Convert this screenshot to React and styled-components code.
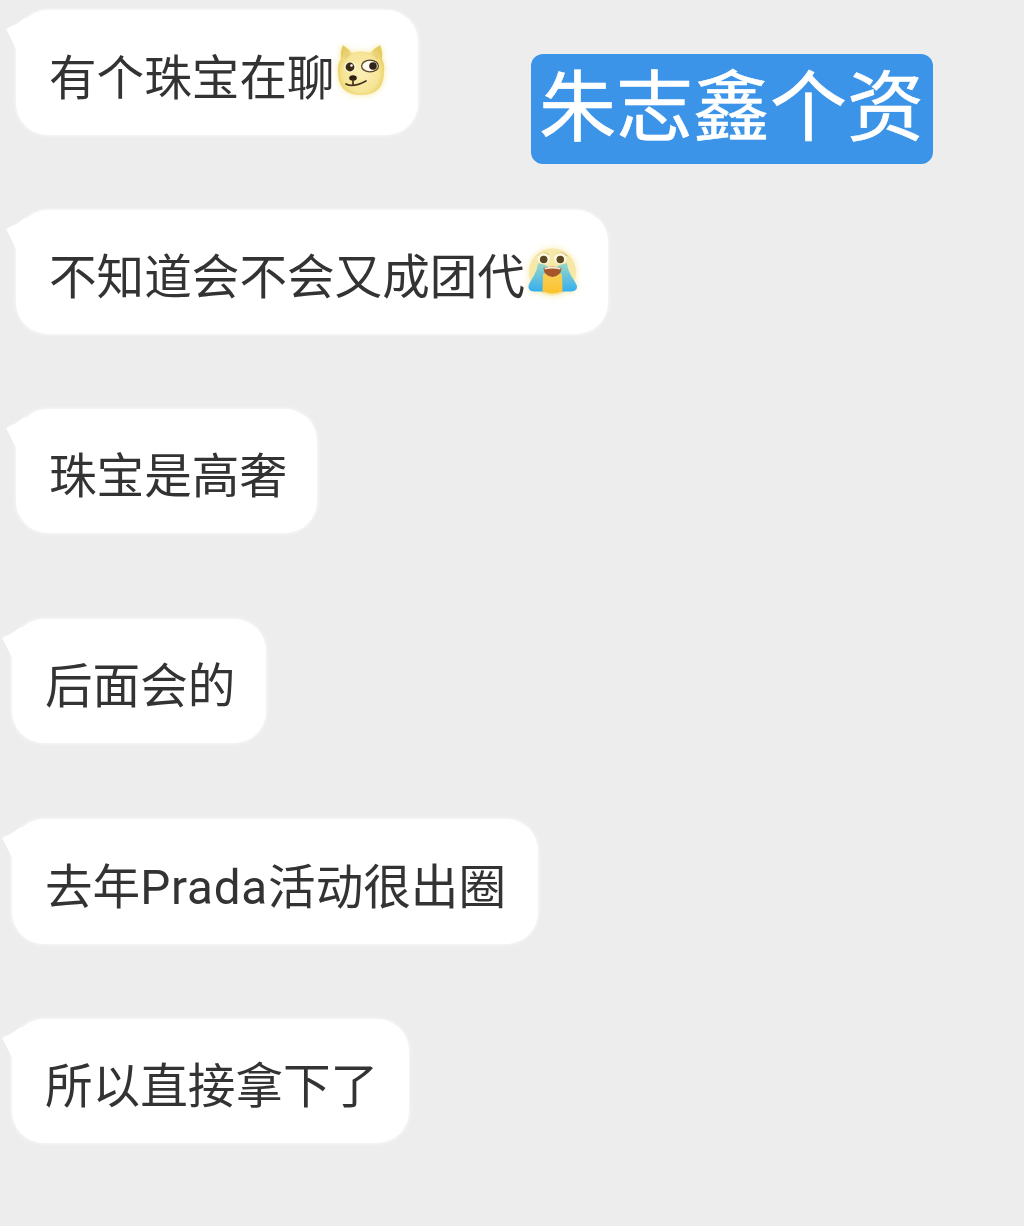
import React from 'react';
import styled, { createGlobalStyle } from 'styled-components';

const GlobalStyle = createGlobalStyle`
  html, body {
    margin: 0;
    padding: 0;
    background: #ededed;
  }
`;

const Page = styled.div`
  position: relative;
  display: flex;
  flex-direction: column;
  align-items: flex-start;
  width: 1024px;
  height: 1226px;
  padding-top: 10px;
  box-sizing: border-box;
  overflow: hidden;
  background: #ededed;
  font-family: Roboto, "Noto Sans CJK SC", "Noto Sans", sans-serif;
`;

const Bubble = styled.div`
  position: relative;
  display: flex;
  align-items: center;
  box-sizing: border-box;
  width: ${(p) => p.$width}px;
  height: ${(p) => p.$height || 124}px;
  margin-left: ${(p) => p.$left}px;
  margin-bottom: ${(p) => p.$gap}px;
  padding-left: 34px;
  background: #ffffff;
  border-radius: 32px;
  box-shadow: 0 0 4px rgba(255, 255, 255, 0.9);

  &::before {
    content: "";
    position: absolute;
    left: -10px;
    top: 7px;
    width: 20px;
    height: 32px;
    background: #ffffff;
    clip-path: polygon(100% 0, 50% 22%, 8% 34%, 0 38%, 14% 54%, 50% 100%, 100% 100%);
    filter: blur(1.2px);
  }
`;

const Message = styled.span`
  font-size: 47.6px;
  line-height: 1;
  font-weight: 400;
  color: #333333;
  white-space: nowrap;
  position: relative;
  top: 7px;
  left: -1px;
  filter: blur(0.5px);
`;

const Latin = styled.span`
  letter-spacing: 0.8px;
`;

const Emoji = styled.svg`
  flex: none;
  display: block;
  margin-top: ${(p) => p.$shift}px;
  margin-left: ${(p) => p.$nudge || 0}px;
  filter: blur(0.5px) drop-shadow(0 0 3px rgba(245, 222, 120, 0.7));
`;

const Label = styled.div`
  position: absolute;
  left: 531px;
  top: 54px;
  box-sizing: border-box;
  width: 402px;
  height: 110px;
  padding: 17px 0 0 8px;
  background: #3c94e8;
  border-radius: 12px;
  color: #ffffff;
  font-size: 77px;
  font-weight: 400;
  line-height: 1;
  white-space: nowrap;
  -webkit-text-stroke: 0.6px #ffffff;
  filter: blur(0.4px);
`;

const DogeEmoji = () => (
  <Emoji width="50" height="54" viewBox="0 0 50 54" $shift={-5} $nudge={1}>
    <defs>
      <radialGradient id="dogeFace" cx="50%" cy="55%" r="55%">
        <stop offset="0%" stopColor="#fbefb8" />
        <stop offset="70%" stopColor="#f6e596" />
        <stop offset="100%" stopColor="#e6cc5e" />
      </radialGradient>
    </defs>
    <path
      d="M6 2 Q10 5 15 10 Q24 7 33 10 Q38 5 43 2 Q46 8 45 16 Q48 22 47 29 Q47 52 24 52 Q1 52 1 29 Q0 22 4 16 Q3 8 6 2Z"
      fill="url(#dogeFace)"
    />
    <path d="M8 7 L13 12 L8 17Z" fill="#e7cf7c" />
    <path d="M41 7 L36 12 L41 17Z" fill="#e7cf7c" />
    <ellipse cx="13" cy="24" rx="6" ry="5.4" fill="#fff6da" />
    <circle cx="13" cy="24" r="4.4" fill="#3a2a16" />
    <circle cx="14.5" cy="22.5" r="1.3" fill="#ffffff" />
    <ellipse cx="33" cy="23" rx="8.4" ry="5.8" fill="#fffdf2" stroke="#5b4526" strokeWidth="1.3" />
    <circle cx="36" cy="23" r="3.8" fill="#2f2316" />
    <ellipse cx="16" cy="35" rx="3.8" ry="2.8" fill="#2c2014" />
    <path d="M16 37 L16 41 M9 41 Q16 45 29 38" fill="none" stroke="#46341c" strokeWidth="1.7" strokeLinecap="round" />
  </Emoji>
);

const CryEmoji = () => (
  <Emoji width="54" height="50" viewBox="0 0 54 50" $shift={0} $nudge={1}>
    <defs>
      <linearGradient id="cryTears" x1="0" y1="0" x2="0" y2="1">
        <stop offset="0%" stopColor="#9ad8c8" />
        <stop offset="100%" stopColor="#35aef0" />
      </linearGradient>
      <linearGradient id="cryFlow" x1="0" y1="0" x2="0" y2="1">
        <stop offset="0%" stopColor="#f6d25a" />
        <stop offset="100%" stopColor="#fdc22e" />
      </linearGradient>
    </defs>
    <circle cx="25.5" cy="25" r="23.5" fill="#f6e8a8" />
    <path d="M11 9 Q17 4 22 8 M29 8 Q34 4 40 9" fill="none" stroke="#cdb563" strokeWidth="1.3" />
    <path
      d="M11 16 C10 27 3 33 1.5 39 C1 44 6 45 10 44.5 L41 44.5 C45 45 50.5 44 50 39 C48 33 41 27 40 16 L33 18 L25.5 22 L18 18Z"
      fill="url(#cryTears)"
    />
    <path d="M16 27 L15.5 44 Q25.5 49 35.5 44 L35 27 L25.5 24Z" fill="url(#cryFlow)" />
    <path d="M16.5 21 Q25.5 18 34.5 21 Q34 29 25.5 30 Q17 29 16.5 21Z" fill="#a6562b" />
    <path d="M17.5 21 Q25.5 18.5 33.5 21 L33.2 22.6 Q25.5 20.6 17.8 22.6Z" fill="#f5edd8" />
    <ellipse cx="16.7" cy="11.5" rx="6.2" ry="5.6" fill="#fff8e0" />
    <circle cx="16.7" cy="12.5" r="3.8" fill="#5b4722" />
    <ellipse cx="33.3" cy="11.5" rx="6.2" ry="5.6" fill="#fff8e0" />
    <circle cx="33.3" cy="12.5" r="3.8" fill="#5b4722" />
  </Emoji>
);

export default function App() {
  return (
    <>
      <GlobalStyle />
      <Page>
        <Bubble $left={16} $width={402} $height={125} $gap={75}>
          <Message>有个珠宝在聊</Message>
          <DogeEmoji />
        </Bubble>
        <Bubble $left={16} $width={592} $gap={75}>
          <Message>不知道会不会又成团代</Message>
          <CryEmoji />
        </Bubble>
        <Bubble $left={16} $width={301} $gap={86}>
          <Message>珠宝是高奢</Message>
        </Bubble>
        <Bubble $left={12} $width={254} $gap={76}>
          <Message>后面会的</Message>
        </Bubble>
        <Bubble $left={12} $width={526} $height={125} $gap={75}>
          <Message>去年<Latin>Prada</Latin>活动很出圈</Message>
        </Bubble>
        <Bubble $left={12} $width={397} $gap={0}>
          <Message>所以直接拿下了</Message>
        </Bubble>
        <Label>朱志鑫个资</Label>
      </Page>
    </>
  );
}
